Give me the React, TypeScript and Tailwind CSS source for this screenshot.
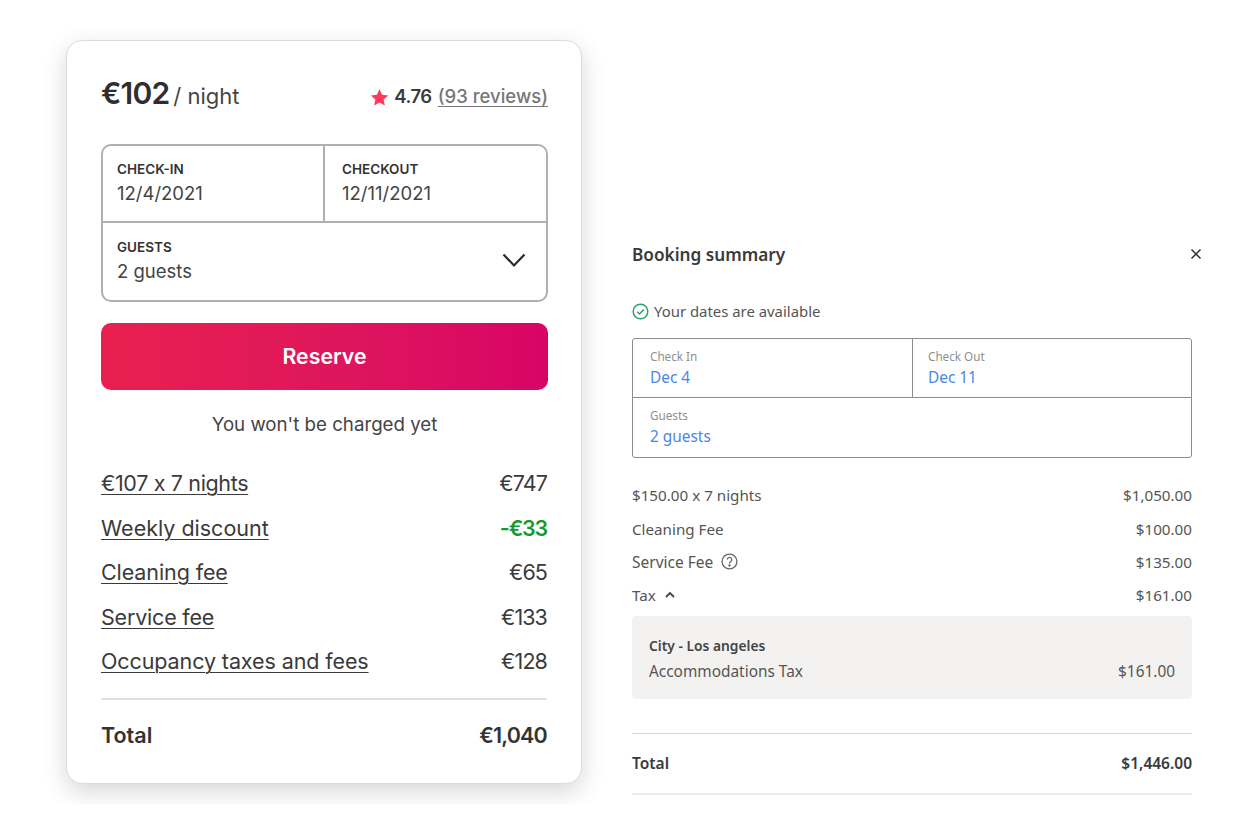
import React from "react";

const Row = ({ label, value, green, mt, lt }: { label: string; value: string; green?: boolean; mt: string; lt?: string }) => (
  <div className={`flex justify-between items-center h-[30px] text-[21.5px] leading-[30px] [font-feature-settings:'calt'_0] ${mt}`}>
    <span className={`underline decoration-[1px] underline-offset-[3px] text-[#3a3a3a] ${lt ?? "tracking-[-0.1px]"}`}>{label}</span>
    <span className={green ? "text-[#179a2c] font-semibold tracking-[-1.2px]" : "text-[#3a3a3a] tracking-[-0.9px]"}>{value}</span>
  </div>
);

const Field = ({ label, value, className }: { label: string; value: string; className?: string }) => (
  <div className={className ?? ""}>
    <div className="text-[13.5px] leading-[20px] font-semibold text-[#333]">{label}</div>
    <div className="text-[18.5px] leading-[28px] text-[#444]">{value}</div>
  </div>
);

const BField = ({ label, value, className }: { label: string; value: string; className?: string }) => (
  <div className={`pl-[17px] pt-[8px] ${className ?? ""}`}>
    <div className="text-[11.7px] leading-[18px] text-[#8f8f8f]">{label}</div>
    <div className="text-[15.4px] leading-[26px] text-[#4a86e8]">{value}</div>
  </div>
);

const SRow = ({ children, value }: { children: React.ReactNode; value: string }) => (
  <div className="flex justify-between items-center h-[33.3px] text-[15.2px] text-[#555]">
    <div className="flex items-center">{children}</div>
    <span>{value}</span>
  </div>
);

export default function App() {
  return (
    <div className="w-[1248px] h-[816px] bg-white flex items-start overflow-hidden">
      <div className="pl-[66px] pr-[50px] pt-[40px] h-[804px] overflow-hidden shrink-0 font-['Inter',sans-serif]">
        <div className="w-[516px] h-[744px] rounded-[16px] bg-white border border-[#dcdcdc] shadow-[0_8px_24px_rgba(0,0,0,0.16)] pl-[34px]">
          <div className="flex justify-between items-center pt-[30px] h-[76px] w-[447px]">
            <div className="flex items-baseline text-[#2e2e2e] -mt-[1px]">
              <span className="text-[30px] font-semibold tracking-[-0.8px]">€102</span>
              <span className="text-[22px] ml-[4px] text-[#444]">/ night</span>
            </div>
            <div className="flex items-center text-[18.5px] font-semibold mt-[6px]">
              <svg width="19" height="19" viewBox="0 0 24 24" className="mr-[5px]">
                <path fill="#ff385c" d="M12 1.5l3.2 7.1 7.8.8-5.8 5.2 1.6 7.6L12 18.3l-6.8 3.9 1.6-7.6L1 9.4l7.8-.8z" />
              </svg>
              <span className="text-[#3a3a3a] tracking-[-0.5px]">4.76</span>
              <span className="ml-[6px] underline underline-offset-[3px] font-medium text-[#777]">(93 reviews)</span>
            </div>
          </div>

          <div className="mt-[27px] w-[447px] h-[158px] border-2 border-[#b0b0b0] rounded-[10px] flex flex-col">
            <div className="flex h-[77px] border-b-2 border-[#b0b0b0]">
              <Field label="CHECK-IN" value="12/4/2021" className="w-[222px] pl-[14px] pt-[13px] border-r-2 border-[#b0b0b0]" />
              <Field label="CHECKOUT" value="12/11/2021" className="flex-1 pl-[17px] pt-[13px]" />
            </div>
            <div className="flex flex-1 items-start justify-between">
              <Field label="GUESTS" value="2 guests" className="pl-[14px] pt-[14px]" />
              <svg width="26" height="16" viewBox="0 0 26 16" fill="none" stroke="#2b2b2b" strokeWidth="2.2" className="mt-[29px] mr-[19px]">
                <path d="M2.5 2.5L13 13.5L23.5 2.5" />
              </svg>
            </div>
          </div>

          <button className="mt-[21px] block w-[447px] h-[67px] rounded-[10px] bg-gradient-to-r from-[#e8204f] to-[#d70466] text-white text-[21.3px] font-semibold">
            Reserve
          </button>

          <div className="mt-[21px] w-[447px] text-center text-[18.7px] leading-[28px] text-[#444]">You won't be charged yet</div>

          <div className="w-[446px] mt-[29px]">
            <Row mt="mt-0" label="€107 x 7 nights" value="€747" lt="tracking-[-0.35px]" />
            <Row mt="mt-[15px]" label="Weekly discount" value="-€33" green lt="tracking-0" />
            <Row mt="mt-[14px]" label="Cleaning fee" value="€65" />
            <Row mt="mt-[15px]" label="Service fee" value="€133" lt="tracking-[-0.2px]" />
            <Row mt="mt-[14px]" label="Occupancy taxes and fees" value="€128" />
            <div className="mt-[22px] h-[2px] bg-[#dfdfdf]" />
            <div className="mt-[20px] flex justify-between items-center h-[30px] text-[21.5px] font-semibold text-[#333]">
              <span>Total</span>
              <span className="tracking-[-0.8px]">€1,040</span>
            </div>
          </div>
        </div>
      </div>

      <div className="mt-[241px] w-[560px] shrink-0 font-['Noto_Sans',sans-serif]">
        <div className="flex justify-between items-center h-[28px] relative">
          <span className="text-[17.2px] font-semibold text-[#3a3a3a]">Booking summary</span>
          <svg width="12" height="12" viewBox="0 0 12 12" fill="none" stroke="#333" strokeWidth="1.5" className="absolute left-[558px] top-[7px]">
            <path d="M1.5 1.5L10.5 10.5M10.5 1.5L1.5 10.5" />
          </svg>
        </div>
        <div className="mt-[28px] flex items-center h-[28px] text-[14.9px] text-[#555]">
          <svg width="17" height="17" viewBox="0 0 17 17" fill="none" stroke="#2e9e74" strokeWidth="1.5" className="mr-[5px]">
            <circle cx="8.5" cy="8.5" r="7.3" />
            <path d="M5.2 8.7L7.5 11L11.8 6.4" />
          </svg>
          Your dates are available
        </div>
        <div className="mt-[13px] h-[120px] border border-[#8c8c8c] rounded-[3px] flex flex-col">
          <div className="flex h-[59px] border-b border-[#8c8c8c]">
            <BField label="Check In" value="Dec 4" className="w-[280px] border-r border-[#8c8c8c]" />
            <BField label="Check Out" value="Dec 11" className="flex-1 !pl-[15px]" />
          </div>
          <BField label="Guests" value="2 guests" />
        </div>

        <div className="mt-[21px]">
          <SRow value="$1,050.00">$150.00 x 7 nights</SRow>
          <SRow value="$100.00">Cleaning Fee</SRow>
          <SRow value="$135.00">
            <span className="text-[15.5px]">Service Fee</span>
            <svg width="17" height="17" viewBox="0 0 16 16" fill="none" stroke="#666" strokeWidth="1.2" className="ml-[8px] -mt-[2px]">
              <circle cx="8" cy="8" r="7" />
              <path d="M5.9 6.2a2.1 2.1 0 1 1 3.3 1.8c-.8.5-1.2.9-1.2 1.8" />
              <circle cx="8" cy="11.8" r="0.5" fill="#666" />
            </svg>
          </SRow>
          <SRow value="$161.00">
            Tax
            <svg width="10" height="7" viewBox="0 0 10 7" fill="none" stroke="#444" strokeWidth="1.8" className="ml-[9px] -mt-[2px]">
              <path d="M1 6L5 2L9 6" />
            </svg>
          </SRow>
        </div>

        <div className="mt-[4px] h-[83px] rounded-[4px] bg-[#f3f2f1] px-[17px] pt-[20px]">
          <div className="text-[13.8px] leading-[20px] font-semibold text-[#444]">City - Los angeles</div>
          <div className="flex justify-between text-[15.4px] leading-[24px] text-[#555] mt-[4px]">
            <span>Accommodations Tax</span>
            <span>$161.00</span>
          </div>
        </div>

        <div className="mt-[34px] h-px bg-[#d6d6d6]" />
        <div className="h-[59px] flex justify-between items-center text-[15.5px] font-semibold text-[#3a3a3a]">
          <span>Total</span>
          <span>$1,446.00</span>
        </div>
        <div className="h-[2px] bg-[#ececec]" />
      </div>
    </div>
  );
}
